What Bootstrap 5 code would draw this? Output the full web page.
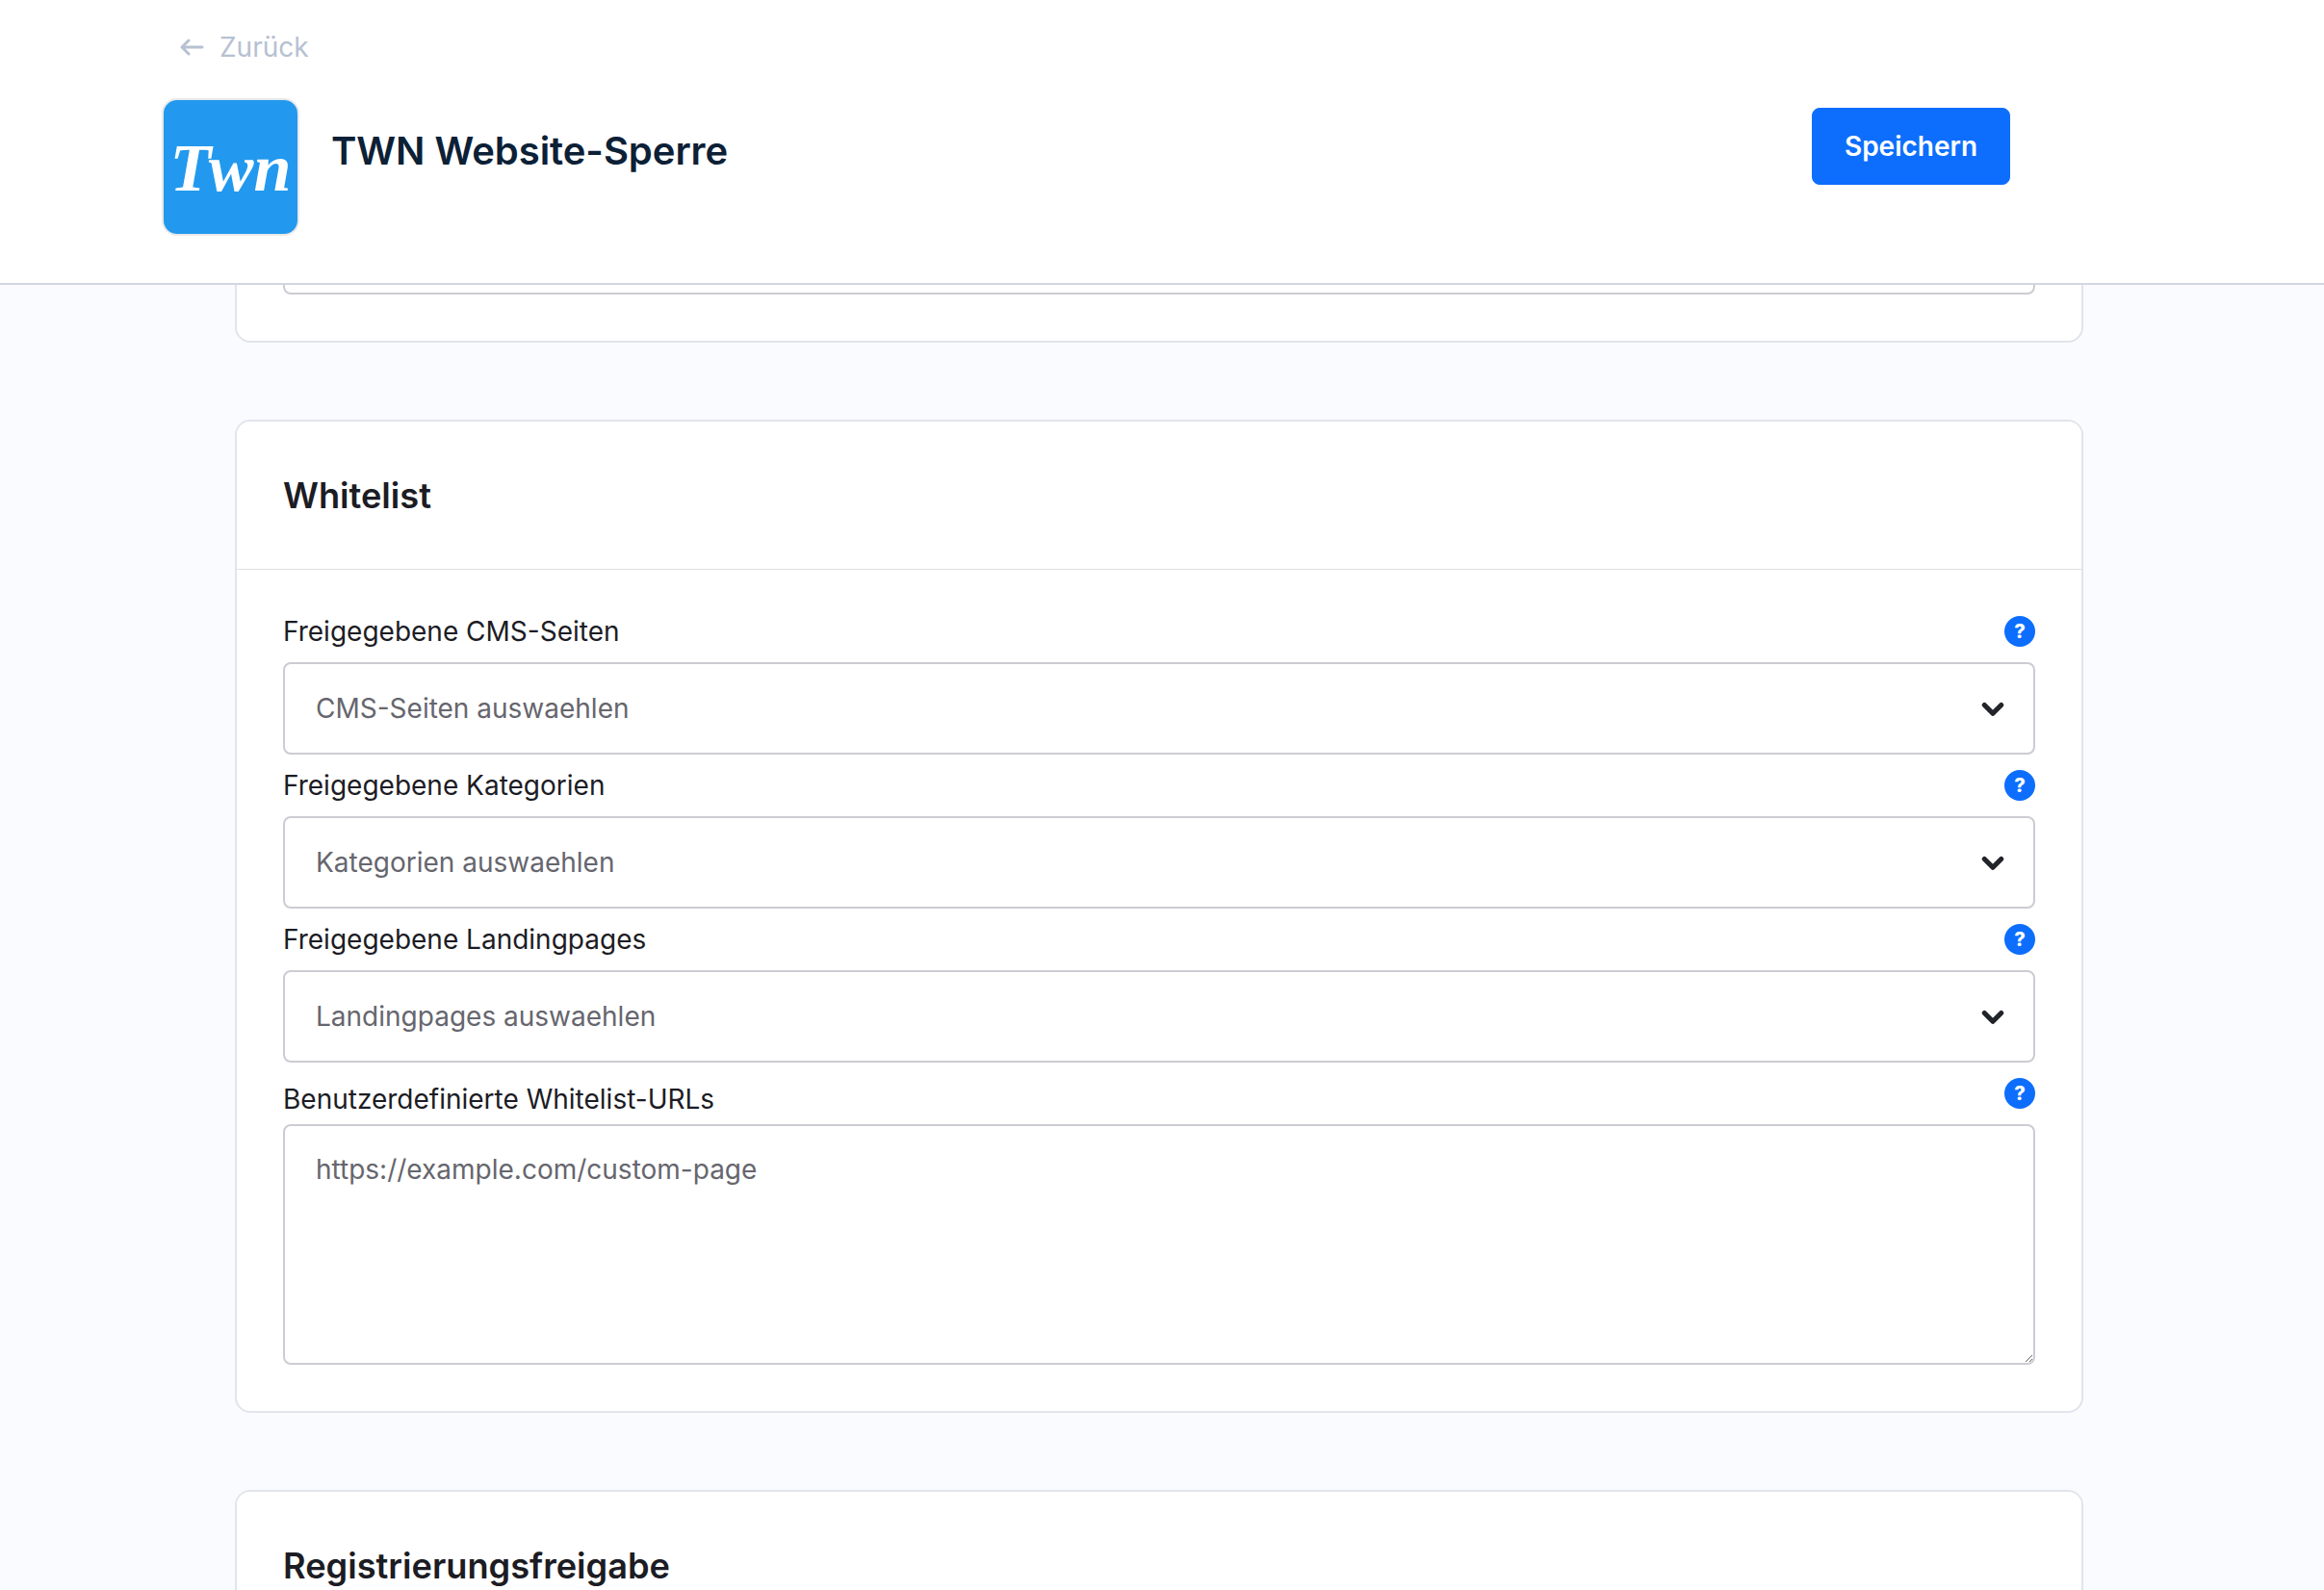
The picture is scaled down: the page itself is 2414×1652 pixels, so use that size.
<!DOCTYPE html>
<html lang="de">
<head>
	<meta charset="utf-8">
	<meta name="viewport" content="width=device-width, initial-scale=1">
	<title>TWN Website-Sperre</title>
	<link href="https://cdn.jsdelivr.net/npm/bootstrap@5.3.3/dist/css/bootstrap.min.css" rel="stylesheet">
	<style>
		html, body { height: 100%; overflow: hidden; }
		body { background-color: #f9fbff; font-family: Inter, "Liberation Sans", sans-serif; color: #1c1c24; }

		.top-bar { height: 296px; background: #fff; border-bottom: 2px solid #d3d6e2; padding: 0 326px 0 168px; z-index: 1030; }
		.back-link { height: 102px; padding-bottom: 4px; padding-left: 18px; gap: 16px; color: #b6c1d2; font-size: 28px; text-decoration: none; }
		.app-logo { width: 143px; height: 143px; background: #2299ee; border: 2px solid #e8e8e8; border-radius: 16px; color: #fff; font: italic 700 70px "Liberation Serif", serif; line-height: 1; padding-top: 2px; }
		.app-title { margin: 31px 0 0 33px; font-size: 40px; font-weight: 600; line-height: 48px; color: #0c2036; letter-spacing: -.05px; }
		.save-btn { width: 206px; height: 80px; margin-top: 10px; font-size: 28px; font-weight: 600; --bs-btn-border-radius: 8px; }

		.page-wrap { padding: 160px 250px 0 244px; }
		.settings-card { --bs-card-border-width: 2px; --bs-card-border-color: #e2e4ec; --bs-card-border-radius: 16px; --bs-card-inner-border-radius: 14px; --bs-card-cap-bg: #fff; --bs-card-cap-padding-y: 48px; --bs-card-cap-padding-x: 48px; --bs-card-spacer-y: 48px; --bs-card-spacer-x: 48px; margin-bottom: 80px; }
		.settings-card .card-header { height: 154px; margin-bottom: 0; }
		.card-head-text { font-size: 36.2px; font-weight: 600; line-height: 54px; margin: 0; color: #1c1c24; }

		.field-head { height: 32px; margin-bottom: 16px; }
		.field-head label { font-size: 28px; line-height: 32px; margin: 0; color: #1c1c24; }
		.field-head.low-label label { position: relative; top: 6px; }
		.help-dot { width: 32px; height: 32px; background: #0d6efd; color: #fff; font-size: 20px; font-weight: 800; line-height: 32px; text-align: center; }

		.form-select, .form-control { border: 2px solid #ccccd4; border-radius: 8px; font-size: 28px; color: #66666e; padding: 0 32px; }
		.form-select { height: 96px; background-size: 28px 28px; background-position: right 28px center; background-image: url("data:image/svg+xml,%3csvg xmlns='http://www.w3.org/2000/svg' viewBox='0 0 16 16'%3e%3cpath fill='none' stroke='%23212529' stroke-linecap='round' stroke-linejoin='round' stroke-width='3' d='m3 6 5 5 5-5'/%3e%3c/svg%3e"); }
		.form-control { height: 96px; }
		.url-area { height: 250px; padding-top: 28px; padding-bottom: 28px; line-height: 34px; }
		.form-control::placeholder { color: #66666e; opacity: 1; }
	</style>
</head>
<body>

<header class="top-bar position-fixed top-0 start-0 end-0">
	<a class="back-link d-flex align-items-center" href="#">
		<svg width="26" height="18" viewBox="0 0 26 18" fill="none" stroke="#b6c1d2" stroke-width="3" stroke-linecap="round" stroke-linejoin="round"><path d="M24 9H3M10 2 3 9l7 7"/></svg>
		<span>Zurück</span>
	</a>
	<div class="d-flex align-items-start">
		<div class="app-logo d-flex align-items-center justify-content-center flex-shrink-0">Twn</div>
		<h1 class="app-title flex-grow-1">TWN Website-Sperre</h1>
		<button class="btn btn-primary save-btn" type="button">Speichern</button>
	</div>
</header>

<main class="page-wrap">
	<!-- previous card, mostly under the top bar -->
	<section class="card settings-card">
		<div class="card-body">
			<input class="form-control" type="text" aria-label="Blockierte Seiten">
		</div>
	</section>

	<section class="card settings-card">
		<div class="card-header d-flex align-items-center border-bottom">
			<h2 class="card-head-text">Whitelist</h2>
		</div>
		<div class="card-body">
			<div class="mb-3">
				<div class="field-head d-flex justify-content-between align-items-center">
					<label for="cms">Freigegebene CMS-Seiten</label>
					<span class="help-dot rounded-circle">?</span>
				</div>
				<select class="form-select" id="cms"><option>CMS-Seiten auswaehlen</option></select>
			</div>
			<div class="mb-3">
				<div class="field-head d-flex justify-content-between align-items-center">
					<label for="cat">Freigegebene Kategorien</label>
					<span class="help-dot rounded-circle">?</span>
				</div>
				<select class="form-select" id="cat"><option>Kategorien auswaehlen</option></select>
			</div>
			<div class="mb-3">
				<div class="field-head d-flex justify-content-between align-items-center">
					<label for="land">Freigegebene Landingpages</label>
					<span class="help-dot rounded-circle">?</span>
				</div>
				<select class="form-select" id="land"><option>Landingpages auswaehlen</option></select>
			</div>
			<div>
				<div class="field-head low-label d-flex justify-content-between align-items-center">
					<label for="urls">Benutzerdefinierte Whitelist-URLs</label>
					<span class="help-dot rounded-circle">?</span>
				</div>
				<textarea class="form-control url-area" id="urls" placeholder="https://example.com/custom-page"></textarea>
			</div>
		</div>
	</section>

	<section class="card settings-card">
		<div class="card-header d-flex align-items-center border-bottom">
			<h2 class="card-head-text">Registrierungsfreigabe</h2>
		</div>
	</section>
</main>

<script src="https://cdn.jsdelivr.net/npm/bootstrap@5.3.3/dist/js/bootstrap.bundle.min.js"></script>
</body>
</html>
